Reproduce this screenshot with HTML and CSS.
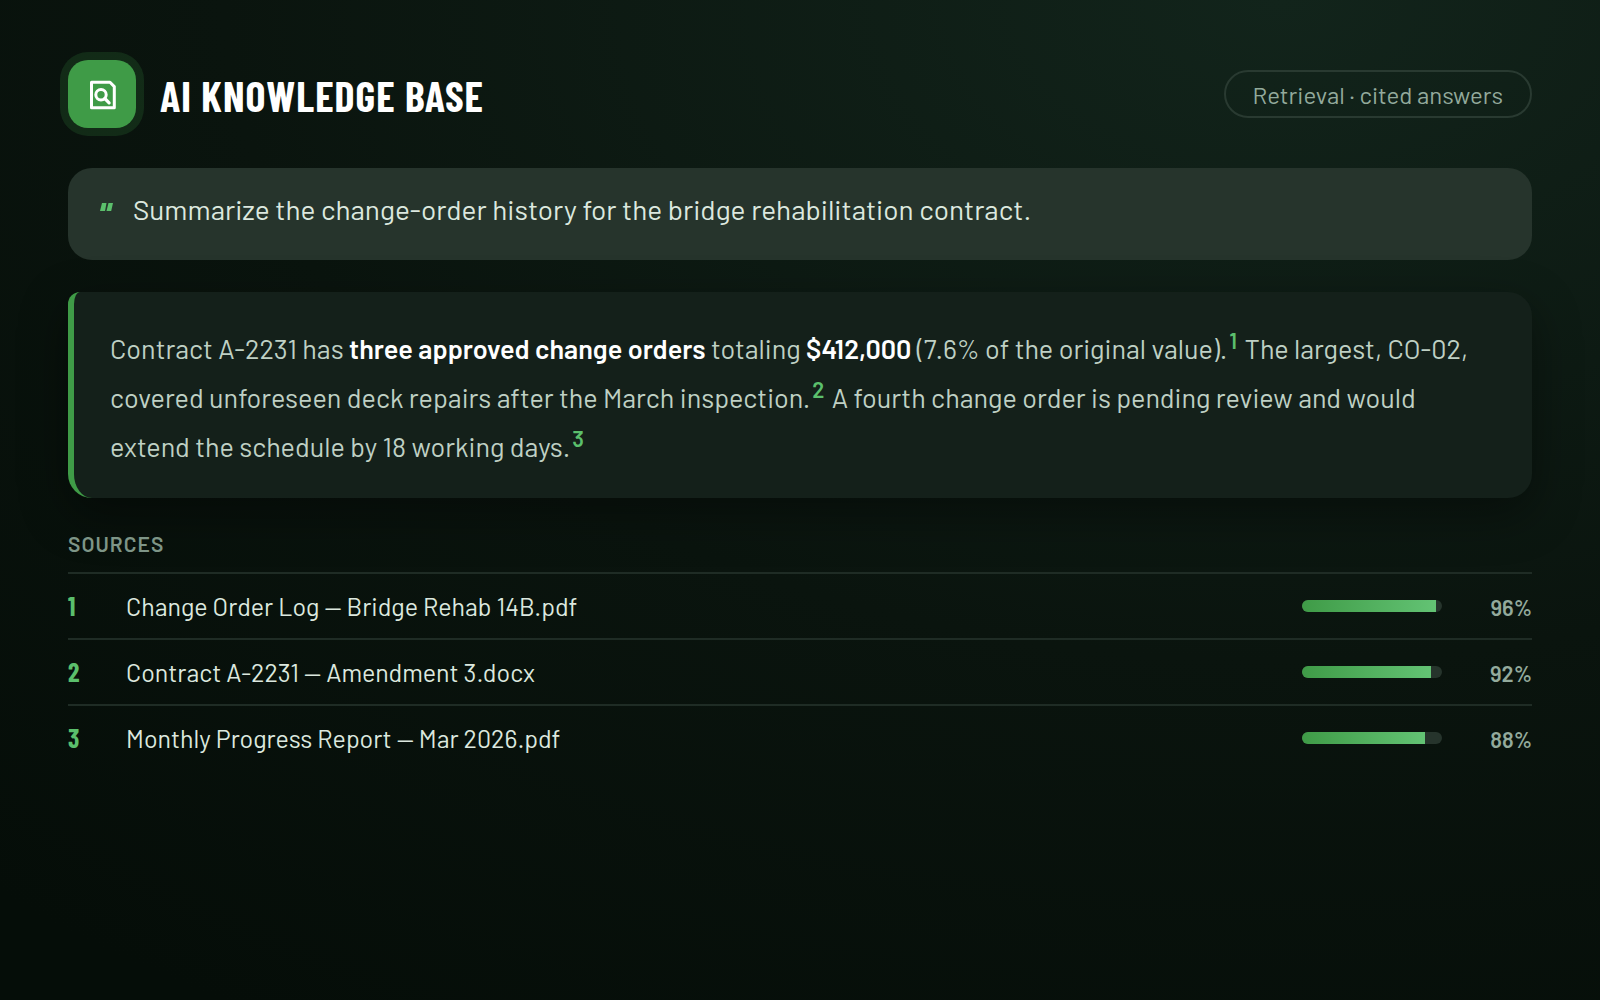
FILE: index.html
```html
<!DOCTYPE html>
<html lang="en">
<head>
  <meta charset="UTF-8" />
  <meta name="viewport" content="width=device-width, initial-scale=1" />
  <title>AI Knowledge Base</title>
  <link rel="stylesheet" href="styles.css">
</head>
<body>

<main class="page">
  <header class="header">
    <div class="logo">
      <svg viewBox="0 0 28 32" width="28" height="32" fill="none" stroke="#fff" aria-hidden="true">
        <path d="M3.500 4.300h18.500l4.300 4.300v21.200H3.500z" stroke-width="3" stroke-linejoin="round" />
        <circle cx="13" cy="16.700" r="5.200" stroke-width="3" />
        <path d="M16.800 20.500l4.300 4.300" stroke-width="3.200" stroke-linecap="round" />
      </svg>
    </div>
    <h1>AI KNOWLEDGE BASE</h1>
    <span class="tag">Retrieval · cited answers</span>
  </header>

  <section class="query">
    <svg class="quote" viewBox="0 0 13 8" width="13" height="8" fill="#5bbf6c" aria-hidden="true">
      <path d="M2 0h4.500L5 8H0zM8.500 0H13l-1.800 8H6.500z" />
    </svg>
    <p>Summarize the change-order history for the bridge rehabilitation contract.</p>
  </section>

  <section class="answer">
    <p>Contract A-2231 has <strong>three approved change orders</strong> totaling <strong>$412,000</strong> (7.6% of the original value).<sup>1</sup> The largest, CO-02, covered unforeseen deck repairs after the March inspection.<sup>2</sup> A fourth change order is pending review and would extend the schedule by 18 working days.<sup>3</sup></p>
  </section>

  <section class="sources">
    <h2>SOURCES</h2>
    <div class="source">
      <span class="num">1</span>
      <span class="name">Change Order Log — Bridge Rehab 14B.pdf</span>
      <div class="bar"><div class="fill" style="width: 96%"></div></div>
      <span class="pct">96%</span>
    </div>
    <div class="source">
      <span class="num">2</span>
      <span class="name">Contract A-2231 — Amendment 3.docx</span>
      <div class="bar"><div class="fill" style="width: 92%"></div></div>
      <span class="pct">92%</span>
    </div>
    <div class="source">
      <span class="num">3</span>
      <span class="name">Monthly Progress Report — Mar 2026.pdf</span>
      <div class="bar"><div class="fill" style="width: 88%"></div></div>
      <span class="pct">88%</span>
    </div>
  </section>
</main>

</body>
</html>
```
FILE: styles.css
```css
* {
  box-sizing: border-box;
}
body {
  margin: 0;
  min-height: 100vh;
  font-family: Barlow, Roboto, "Liberation Sans", sans-serif;
  color: #dce8df;
  background: radial-gradient(120% 120% at 80% 0%, #12241b, #0a140e 55%, #050d08);
}
h1, h2, p {
  margin: 0;
}
.page {
  padding: 60px 68px;
}
.header {
  display: flex;
  align-items: center;
  gap: 24px;
  margin-bottom: 40px;
}
.logo {
  display: flex;
  align-items: center;
  justify-content: center;
  width: 68px;
  height: 68px;
  border-radius: 20px;
  background: #3f9b47;
  box-shadow: 0 0 0 8px rgba(63, 155, 71, 0.18);
}
h1 {
  padding-top: 2px;
  font-family: "Barlow Condensed", "Roboto Condensed", "Liberation Sans Narrow", Roboto, sans-serif;
  font-size: 42px;
  line-height: 48px;
  font-weight: 700;
  letter-spacing: 1px;
  color: #fff;
}
.tag {
  margin-left: auto;
  padding: 1px 27px 0;
  border: 2px solid #293a31;
  border-radius: 24px;
  font-size: 24px;
  line-height: 43px;
  color: #93aa9c;
}
.query {
  display: flex;
  align-items: flex-start;
  gap: 20px;
  min-height: 92px;
  margin-bottom: 32px;
  padding: 23px 32px;
  border-radius: 24px;
  background: #26342c;
  font-size: 28px;
  line-height: 36px;
}
.quote {
  flex: none;
  margin-top: 12px;
}
.answer {
  margin-bottom: 32px;
  padding: 32px 36px 27px;
  border-left: 6px solid #3f9b47;
  border-radius: 12px 24px 24px 24px;
  background: #14201a;
  box-shadow: 0 16px 48px rgba(0, 0, 0, 0.4);
  font-size: 27px;
  line-height: 49px;
  color: #bfd0c4;
}
.answer strong {
  font-weight: 600;
  color: #fff;
}
.answer sup {
  margin: 0 2px;
  font-size: 22px;
  line-height: 0;
  font-weight: 600;
  color: #5bbf6c;
}
.sources h2 {
  padding-bottom: 14px;
  font-size: 21px;
  line-height: 28px;
  font-weight: 600;
  letter-spacing: 1px;
  color: #7e9587;
}
.source {
  display: grid;
  grid-template-columns: 30px 1fr 140px 62px;
  align-items: center;
  gap: 28px;
  height: 66px;
  border-top: 2px solid #1f2c25;
}
.num {
  padding-bottom: 1px;
  font-family: "Barlow Condensed", "Roboto Condensed", "Liberation Sans Narrow", Roboto, sans-serif;
  font-size: 26px;
  font-weight: 700;
  color: #5bbf6c;
}
.name {
  font-size: 25px;
}
.bar {
  height: 12px;
  border-radius: 6px;
  background: #26342c;
  overflow: hidden;
}
.fill {
  height: 100%;
  background: linear-gradient(90deg, #3f9b47, #63c374);
}
.pct {
  padding-top: 2px;
  font-size: 22px;
  font-weight: 600;
  text-align: right;
  color: #93aa9c;
}
```
